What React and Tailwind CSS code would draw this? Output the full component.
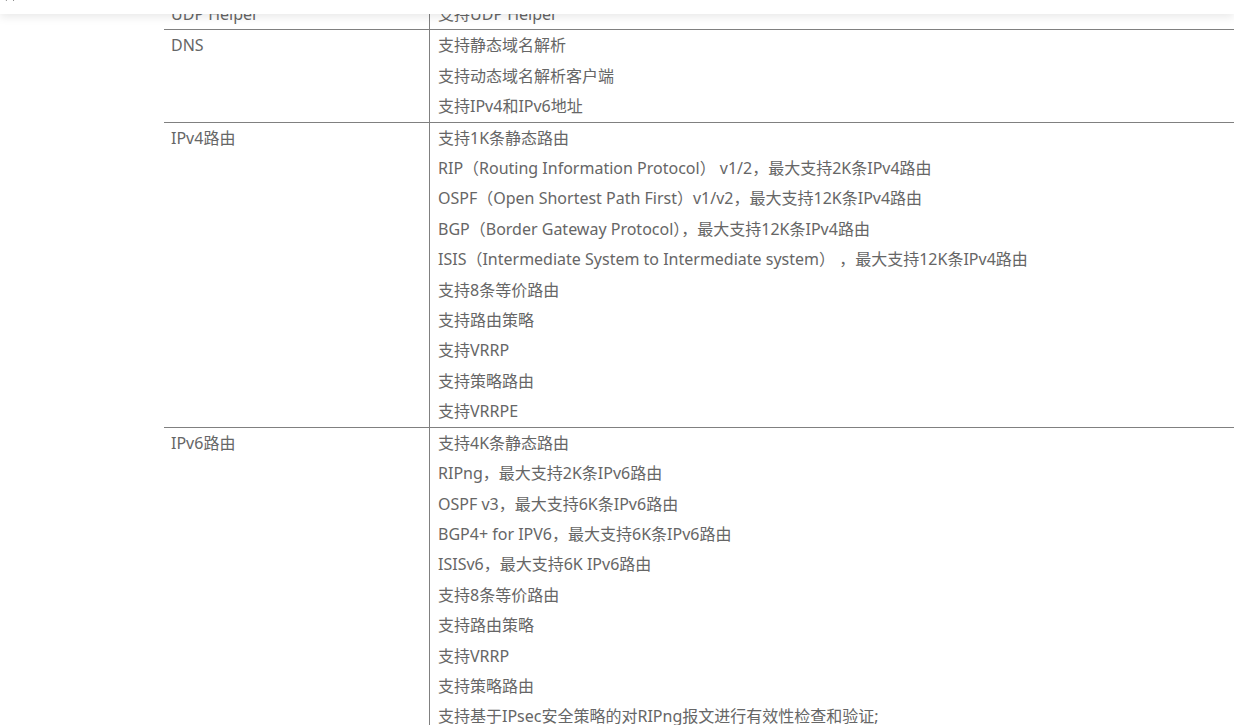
const rows = [
  { name: 'UDP Helper', items: ['支持UDP Helper'] },
  { name: 'DNS', items: ['支持静态域名解析', '支持动态域名解析客户端', '支持IPv4和IPv6地址'] },
  {
    name: 'IPv4路由',
    items: [
      '支持1K条静态路由',
      'RIP（Routing Information Protocol） v1/2，最大支持2K条IPv4路由',
      'OSPF（Open Shortest Path First）v1/v2，最大支持12K条IPv4路由',
      'BGP（Border Gateway Protocol），最大支持12K条IPv4路由',
      'ISIS（Intermediate System to Intermediate system） ，最大支持12K条IPv4路由',
      '支持8条等价路由',
      '支持路由策略',
      '支持VRRP',
      '支持策略路由',
      '支持VRRPE',
    ],
  },
  {
    name: 'IPv6路由',
    items: [
      '支持4K条静态路由',
      'RIPng，最大支持2K条IPv6路由',
      'OSPF v3，最大支持6K条IPv6路由',
      'BGP4+ for IPV6，最大支持6K条IPv6路由',
      'ISISv6，最大支持6K IPv6路由',
      '支持8条等价路由',
      '支持路由策略',
      '支持VRRP',
      '支持策略路由',
      '支持基于IPsec安全策略的对RIPng报文进行有效性检查和验证;',
    ],
  },
]

export default function App() {
  return (
    <div
      className="relative min-h-screen overflow-hidden bg-white text-[16px] leading-[30.4px] text-[#666]"
      style={{ fontFamily: '"Noto Sans", "Noto Sans CJK SC", sans-serif' }}
    >
      {/* sticky top bar */}
      <div className="fixed left-0 right-0 top-0 z-10 h-[14px] bg-white shadow-[0_3px_10px_rgba(0,0,0,0.09)]">
        <span className="absolute left-[4px] top-[-12px] text-[12px] leading-[16px] text-[#888]">目</span>
      </div>

      <div className="-mt-[1px] pl-[164px]">
        {rows.map((row, i) => (
          <div key={i} className="flex border-b border-[#808080]">
            <div className="w-[266px] shrink-0 border-r border-[#808080] pl-[7px]">{row.name}</div>
            <div className="flex-1 pl-[8px]">
              {row.items.map((t, j) => (
                <div key={j} className="whitespace-nowrap">{t}</div>
              ))}
            </div>
          </div>
        ))}
      </div>
    </div>
  )
}
